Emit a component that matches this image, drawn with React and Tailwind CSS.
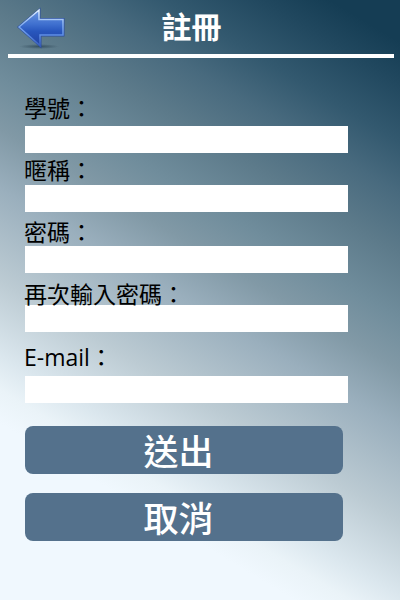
const fields = [
  { id: "student-id", label: "學號：", type: "text", spacing: "gap-2" },
  { id: "nickname", label: "暱稱：", type: "text", spacing: "mt-[7px] gap-[5px]" },
  { id: "password", label: "密碼：", type: "password", spacing: "mt-2.5 gap-1" },
  { id: "password-again", label: "再次輸入密碼：", type: "password", spacing: "mt-[11px] gap-px" },
  { id: "email", label: "E-mail：", type: "email", spacing: "mt-[15px] gap-[9px]" },
];

function BackArrow() {
  return (
    <svg viewBox="0 0 48 42" className="h-[42px] w-12" aria-hidden="true">
      <defs>
        <linearGradient id="arrow-fill" x1="0" y1="0" x2="0" y2="1">
          <stop offset="0" stopColor="#6c97e2" />
          <stop offset="0.4" stopColor="#3f70cf" />
          <stop offset="0.6" stopColor="#2856bd" />
          <stop offset="1" stopColor="#2142a2" />
        </linearGradient>
        <linearGradient id="arrow-edge" x1="0" y1="0" x2="0" y2="1">
          <stop offset="0" stopColor="#e6f3ff" />
          <stop offset="0.4" stopColor="#86b0f0" />
          <stop offset="0.7" stopColor="#5f8fe6" />
          <stop offset="1" stopColor="#3a5fbc" />
        </linearGradient>
        <radialGradient id="arrow-shadow">
          <stop offset="0" stopColor="#1c3444" stopOpacity="0.6" />
          <stop offset="1" stopColor="#1c3444" stopOpacity="0" />
        </radialGradient>
      </defs>
      <ellipse cx="22" cy="39.5" rx="20" ry="2.5" fill="url(#arrow-shadow)" />
      <path d="M0 20 L23.5 0.5 V11 H47.5 V29.5 H24.5 V41.5 Z" fill="#2c4f9e" />
      <path
        d="M2 20 L22 3 V12.5 H46 V28 H23 V38.5 Z"
        fill="url(#arrow-fill)"
        stroke="url(#arrow-edge)"
        strokeWidth="1.5"
      />
    </svg>
  );
}

export default function App() {
  return (
    <main className="min-h-screen bg-[linear-gradient(211deg,#153d54_0%,#153d54_5%,#21485f_10%,#33596f_17%,#486a7e_23%,#5c7a8a_30%,#708d9c_38%,#8199a6_44%,#9aafbd_51%,#bccbd3_62%,#dbe7ee_71%,#eaf3f8_75%,#f0f8fe_79%,#f0f8fe_100%)] font-['Open_Sans','Noto_Sans_CJK_TC',sans-serif]">
      <header className="mr-1.5 ml-2 flex h-[58px] items-start border-b-4 border-white pt-[7px] pr-[76px] pl-[9px]">
        <button type="button" aria-label="返回" className="shrink-0">
          <BackArrow />
        </button>
        <h1 className="flex-1 text-center text-[30px] leading-10 font-bold text-white">註冊</h1>
      </header>
      <form className="flex flex-col pt-10 pr-[52px] pb-[59px] pl-[25px]">
        {fields.map((field) => (
          <div key={field.id} className={`flex flex-col ${field.spacing}`}>
            <label htmlFor={field.id} className="relative z-10 -ml-px text-[23px] leading-5 text-black">
              {field.label}
            </label>
            <input id={field.id} type={field.type} className="h-[27px] w-full bg-white px-2 text-base outline-none" />
          </div>
        ))}
        <div className="mt-[23px] flex flex-col gap-[19px] pr-[5px] text-[35px] leading-[44px] font-medium text-white">
          <button type="submit" className="h-12 rounded-lg bg-[#54718c] pt-1 pr-[11px]">送出</button>
          <button type="button" className="h-12 rounded-lg bg-[#54718c] pt-1 pr-[11px]">取消</button>
        </div>
      </form>
    </main>
  );
}
